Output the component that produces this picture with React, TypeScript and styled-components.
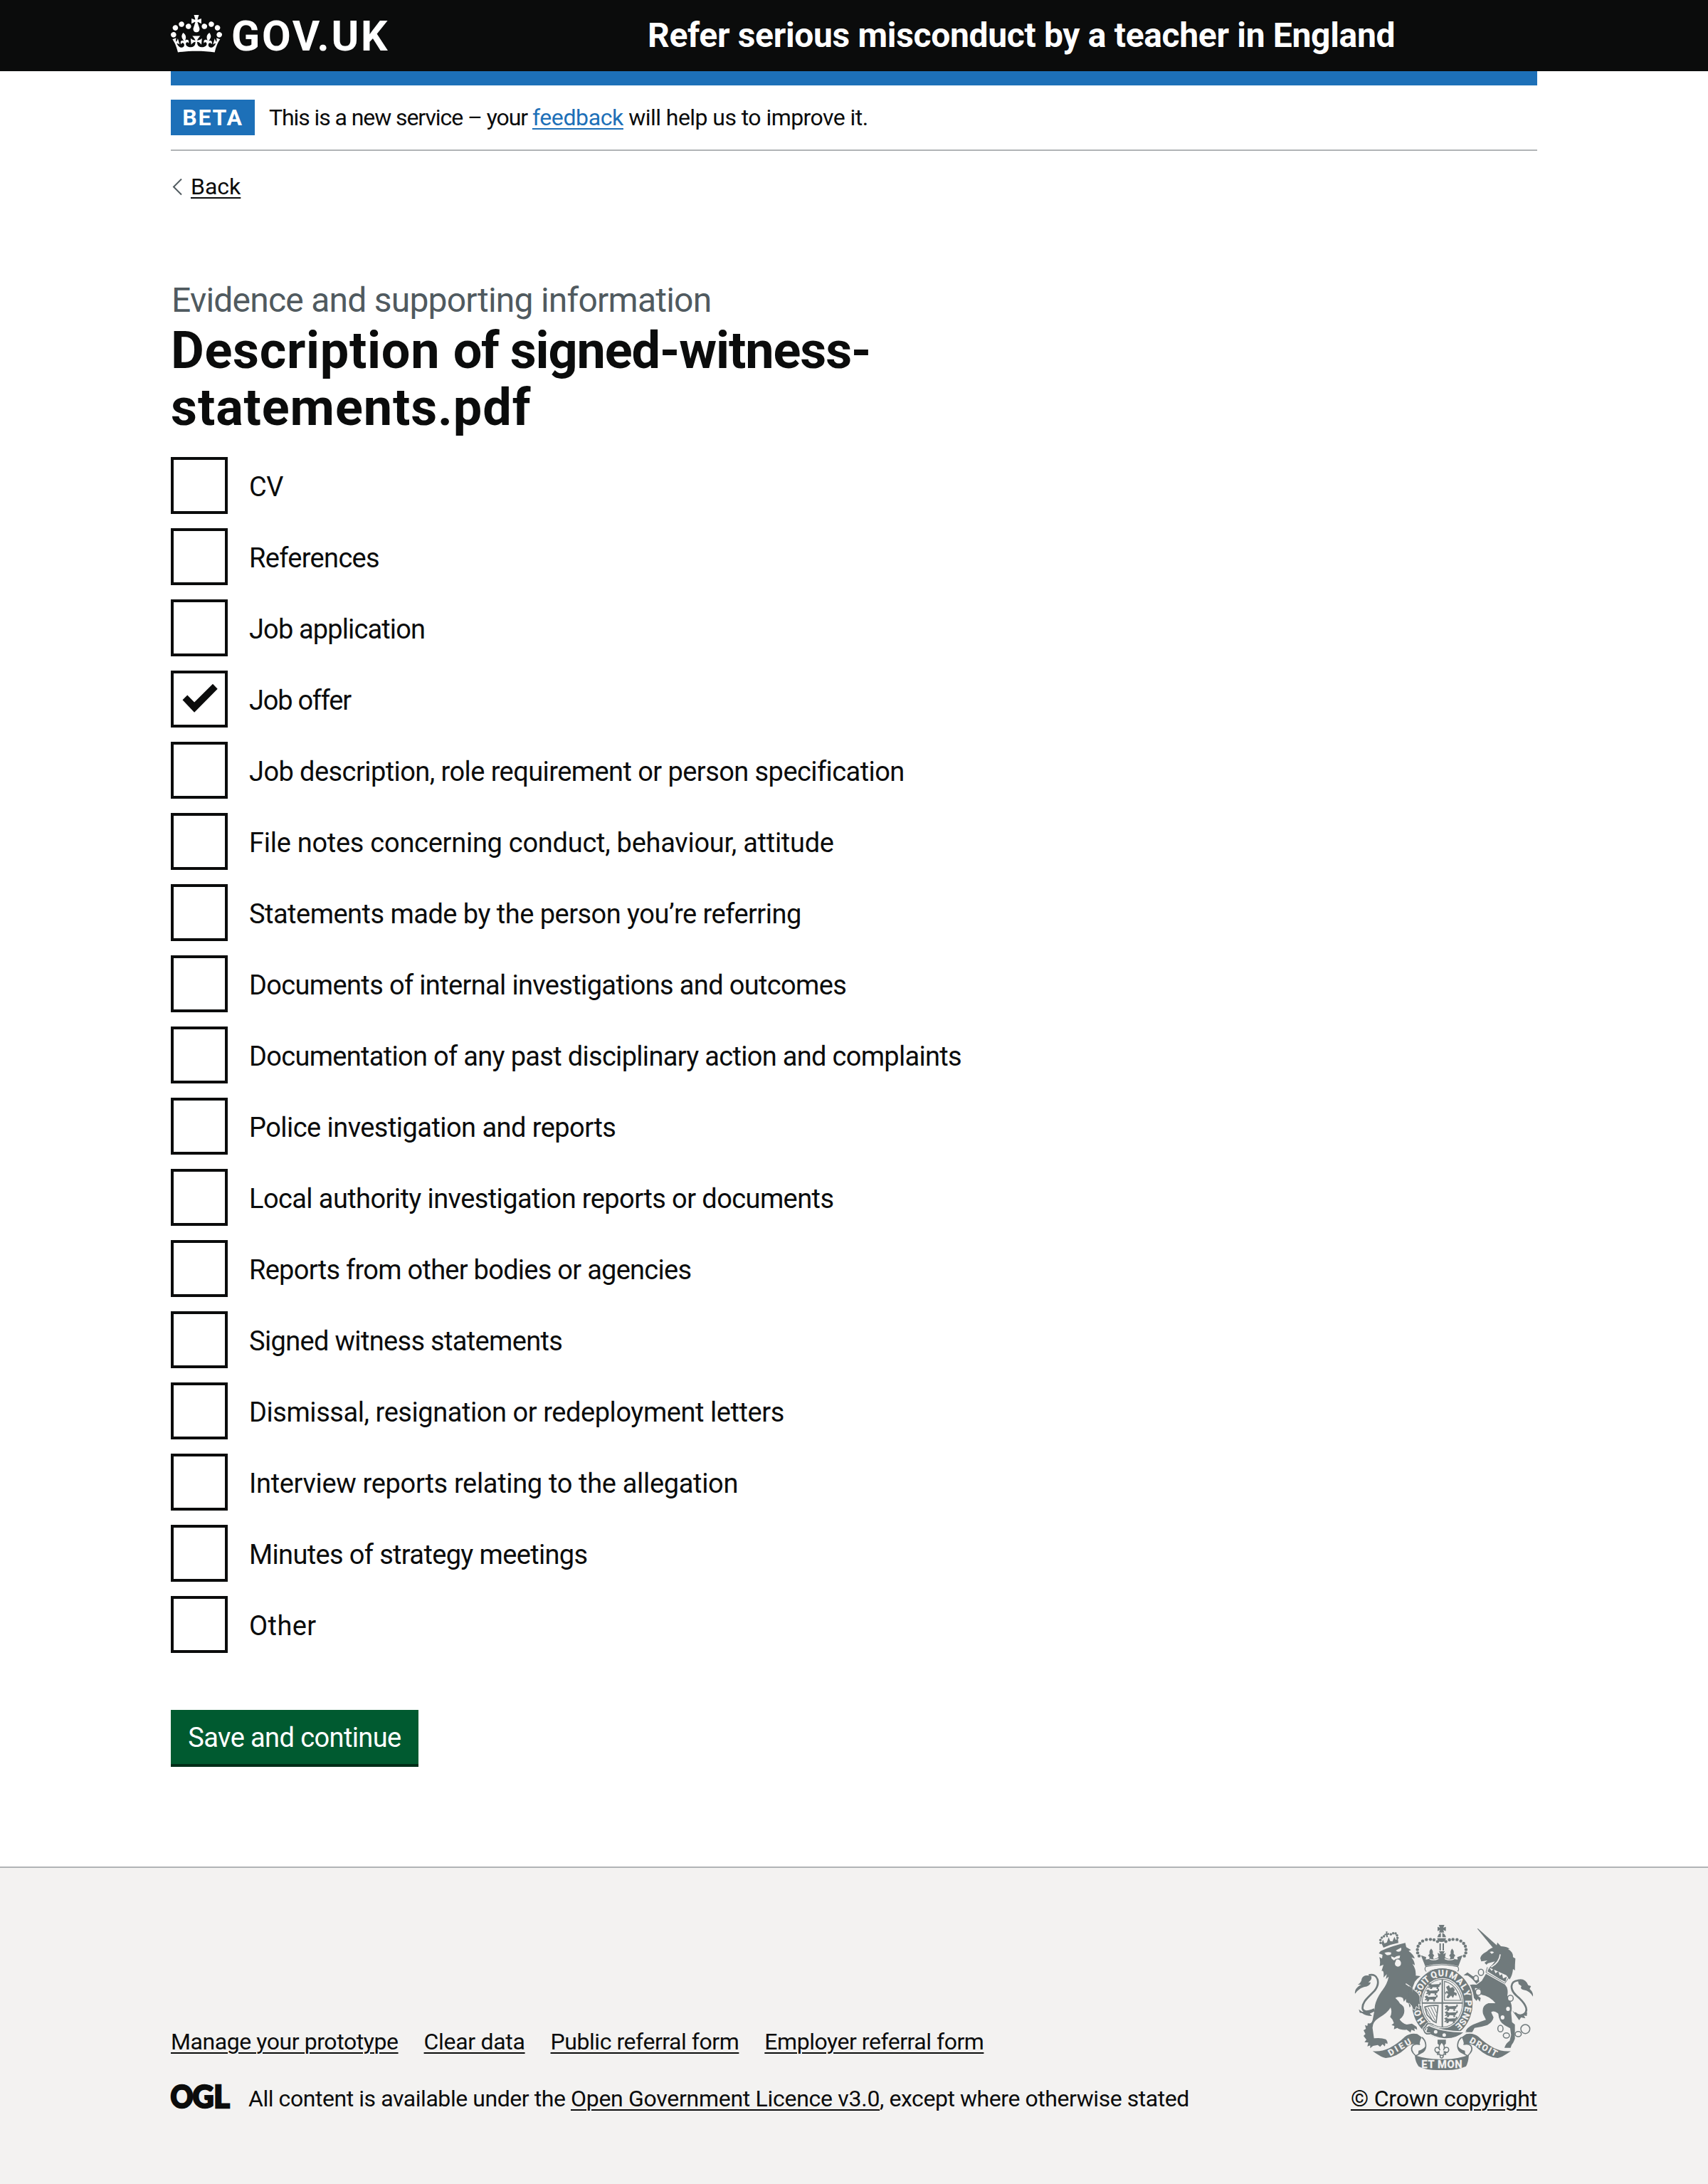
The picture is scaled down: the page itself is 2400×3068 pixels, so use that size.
import React, { useState } from 'react';
import styled, { createGlobalStyle } from 'styled-components';

const ink = '#0b0c0c';
const blue = '#1d70b8';
const rule = '#b1b4b6';
const footerBg = '#f3f2f1';
const crestGrey = '#707a7c';
const sans = 'Roboto, "Noto Sans", Arial, sans-serif';

const GlobalStyle = createGlobalStyle`
  *, *::before, *::after { box-sizing: border-box; }
  body {
    margin: 0;
    background: #fff;
    color: ${ink};
    font-family: ${sans};
    font-size: 38px;
    line-height: 50px;
  }
`;

const Page = styled.div`
  display: flex;
  flex-direction: column;
  min-height: 3068px;
`;

const Container = styled.div`
  width: 1920px;
  margin: 0 auto;
`;

/* header */
const Header = styled.header`
  height: 100px;
  background: ${ink};
  color: #fff;
`;

const HeaderRow = styled(Container)`
  display: flex;
  height: 100px;
`;

const HomeLink = styled.a`
  display: flex;
  align-items: flex-start;
  width: 670px;
  padding-top: 21px;
  color: inherit;
  text-decoration: none;
`;

const Logotype = styled.span`
  margin: -4px 0 0 13px;
  font-size: 59px;
  font-weight: 700;
  line-height: 68px;
  letter-spacing: 2.7px;
`;

const ServiceName = styled.a`
  padding-top: 20px;
  color: inherit;
  font-size: 48px;
  font-weight: 700;
  line-height: 60px;
  letter-spacing: -0.33px;
  text-decoration: none;
`;

const BlueBar = styled.div`
  height: 20px;
  background: ${blue};
`;

/* phase banner */
const PhaseBanner = styled.div`
  display: flex;
  align-items: center;
  gap: 20px;
  padding: 20px 0;
  border-bottom: 2px solid ${rule};
`;

const PhaseTag = styled.strong`
  display: flex;
  justify-content: center;
  width: 118px;
  height: 50px;
  background: ${blue};
  color: #fff;
  font-size: 32px;
  line-height: 51px;
  letter-spacing: 1.8px;
`;

const PhaseText = styled.span<{ $spacing: number }>`
  font-size: 32px;
  line-height: 50px;
  letter-spacing: ${({ $spacing }) => $spacing}px;
  white-space: pre;
`;

const Link = styled.a<{ $color?: string; $spacing?: number }>`
  color: ${({ $color }) => $color ?? ink};
  letter-spacing: ${({ $spacing }) => $spacing ?? 0}px;
  text-decoration: underline;
  text-decoration-thickness: 2px;
  text-underline-offset: 4px;
  white-space: pre;
`;

/* main */
const BackRow = styled.div`
  display: flex;
  align-items: center;
  gap: 12px;
  margin-top: 30px;
  padding-left: 2px;
  font-size: 32px;
  line-height: 40px;
`;

const Main = styled.main`
  padding-top: 110px;
`;

const Caption = styled.span`
  display: block;
  height: 61px;
  padding-left: 1px;
  color: #505a5f;
  font-size: 48px;
  line-height: 60px;
  letter-spacing: -0.77px;
`;

const Title = styled.h1`
  margin: 0 0 29px;
  font-size: 72px;
  font-weight: 700;
  line-height: 80px;
`;

const TitleWord = styled.span<{ $spacing: number }>`
  letter-spacing: ${({ $spacing }) => $spacing}px;
`;

const Options = styled.div`
  display: flex;
  flex-direction: column;
  gap: 20px;
`;

const Option = styled.label`
  display: flex;
  height: 80px;
  cursor: pointer;
`;

const HiddenInput = styled.input`
  appearance: none;
  width: 0;
  height: 0;
  margin: 0;
`;

const Box = styled.span`
  width: 80px;
  height: 80px;
  border: 4px solid ${ink};
  background: #fff;
`;

const OptionText = styled.span<{ $spacing: number }>`
  padding: 17px 0 0 30px;
  letter-spacing: ${({ $spacing }) => $spacing}px;
`;

const Submit = styled.button`
  display: block;
  width: 348px;
  height: 80px;
  margin: 80px 0 140px;
  padding: 1px 0 0;
  border: 0;
  border-bottom: 4px solid #002d18;
  background: #005a30;
  color: #fff;
  font: 400 38px/50px ${sans};
  letter-spacing: -0.6px;
`;

/* footer */
const Footer = styled.footer`
  flex: 1;
  padding-top: 80px;
  border-top: 2px solid ${rule};
  background: ${footerBg};
  font-size: 32px;
  line-height: 40px;
`;

const FooterRow = styled(Container)`
  display: flex;
  justify-content: space-between;
  align-items: flex-end;
`;

const FooterMeta = styled.div`
  display: flex;
  flex-direction: column;
  gap: 40px;
`;

const FooterLinks = styled.nav`
  display: flex;
  gap: 36px;
`;

const Licence = styled.div`
  display: flex;
  gap: 26px;
`;

const LicenceText = styled.span`
  letter-spacing: -0.44px;
  white-space: pre;
`;

const CopyrightColumn = styled.div`
  display: flex;
  flex-direction: column;
  align-items: center;
  gap: 20px;
  width: 262px;
`;

const Drawing = styled.svg`
  display: block;
  flex: none;
  overflow: visible;
`;

const Crown = () => (
  <Drawing width="72" height="53" viewBox="0 0 132 97" fill="#fff" aria-hidden="true">
    <path d="M25 30.2c3.5 1.5 7.7-.2 9.1-3.7 1.5-3.6-.2-7.8-3.9-9.2-3.6-1.4-7.6.3-9.1 3.9-1.4 3.5.3 7.5 3.9 9zM9 39.5c3.6 1.5 7.8-.2 9.2-3.7 1.5-3.6-.2-7.8-3.9-9.1-3.6-1.5-7.6.2-9.1 3.8-1.4 3.5.3 7.5 3.8 9zM4.4 57.2c3.5 1.5 7.7-.2 9.1-3.8 1.5-3.6-.2-7.7-3.9-9.1-3.5-1.5-7.6.3-9.1 3.8-1.4 3.5.3 7.6 3.9 9.1zm38.3-21.4c3.5 1.5 7.7-.2 9.1-3.8 1.5-3.6-.2-7.7-3.9-9.1-3.6-1.5-7.6.3-9.1 3.8-1.3 3.6.4 7.7 3.9 9.1zm64.4-5.6c-3.6 1.5-7.8-.2-9.1-3.7-1.5-3.6.2-7.8 3.8-9.2 3.6-1.4 7.7.3 9.2 3.9 1.3 3.5-.4 7.5-3.9 9zm15.9 9.3c-3.6 1.5-7.7-.2-9.1-3.7-1.5-3.6.2-7.8 3.7-9.1 3.6-1.5 7.7.2 9.2 3.8 1.5 3.5-.3 7.5-3.8 9zm4.7 17.7c-3.6 1.5-7.8-.2-9.2-3.8-1.5-3.6.2-7.7 3.9-9.1 3.6-1.5 7.7.3 9.2 3.8 1.3 3.5-.4 7.6-3.9 9.1zM89.3 35.8c-3.6 1.5-7.8-.2-9.2-3.8-1.4-3.6.2-7.7 3.9-9.1 3.6-1.5 7.7.3 9.2 3.8 1.4 3.6-.3 7.7-3.9 9.1zM69.7 17.7l8.9 4.7V9.3l-8.9 2.8c-.2-.3-.5-.6-.9-.9L72.4 0H59.6l3.5 11.2c-.3.3-.6.5-.9.9l-8.8-2.8v13.1l8.8-4.7c.3.3.6.7.9.9l-5 15.4v.1c-.2.8-.4 1.6-.4 2.4 0 4.1 3.1 7.5 7 8.1h.2c.3 0 .7.1 1 .1.4 0 .7 0 1-.1h.2c4-.6 7.1-4.1 7.1-8.1 0-.8-.1-1.7-.4-2.4V34l-5.1-15.4c.4-.2.7-.6 1-.9zM66 92.8c16.9 0 32.8 1.1 47.1 3.2 4-16.9 8.9-26.7 14-33.5l-9.6-3.4c1 4.9 1.1 7.2 0 10.2-1.5-1.4-3-4.3-4.2-8.7L108.6 76c2.8-2 5-3.2 7.5-3.3-4.4 9.4-10 11.9-13.6 11.2-4.3-.8-6.3-4.6-5.6-7.9 1-4.7 5.7-5.9 8-.5 4.3-8.7-3-11.4-7.6-8.8 7.1-7.2 7.9-13.5 2.1-21.1-8 6.1-8.1 12.3-4.5 20.8-4.7-5.4-12.1-2.5-9.5 6.2 3.4-5.2 7.9-2 7.2 3.1-.6 4.3-6.4 7.8-13.5 7.2-10.3-.9-10.9-8-11.2-13.8 2.5-.5 7.1 1.8 11 7.3L80.2 60c-4.1 4.4-8 5.3-12.3 5.4 1.4-4.4 8-11.6 8-11.6H55.5s6.4 7.2 7.9 11.6c-4.2-.1-8-1-12.3-5.4l1.4 16.4c3.9-5.5 8.5-7.7 10.9-7.3-.3 5.8-.9 12.8-11.1 13.8-7.2.6-12.9-2.9-13.5-7.2-.7-5 3.8-8.3 7.1-3.1 2.7-8.7-4.6-11.6-9.4-6.2 3.7-8.5 3.6-14.7-4.6-20.8-5.8 7.6-5 13.9 2.2 21.1-4.7-2.6-11.9.1-7.7 8.8 2.3-5.5 7.1-4.2 8.1.5.7 3.3-1.3 7.1-5.7 7.9-3.5.7-9-1.8-13.5-11.2 2.5.1 4.7 1.3 7.5 3.3l-4.7-15.4c-1.2 4.4-2.7 7.2-4.3 8.7-1.1-3-.9-5.3 0-10.2l-9.5 3.4c5 6.9 9.9 16.7 14 33.5 14.8-2.1 30.8-3.2 47.7-3.2z" />
  </Drawing>
);

const Chevron = () => (
  <Drawing width="14" height="24" viewBox="0 0 14 24" fill="none" stroke="#505a5f" strokeWidth="2">
    <path d="M13 1.5 2 12.5 13 23.5" />
  </Drawing>
);

const Tick = () => (
  <Drawing width="72" height="72" viewBox="4 4 72 72" fill={ink}>
    <path d="M16.5 41.3 23.3 34.6 33.1 44.4 59 18.8 65.7 25.8 33.1 58.8z" />
  </Drawing>
);

const OglMark = () => (
  <Drawing width="83" height="40" viewBox="0 0 83 40" aria-label="OGL">
    <g fill={ink} stroke={ink} strokeWidth="2.4" fontFamily="Lato" fontWeight="900" fontSize="43">
      <text x="-0.5" y="33" textLength="32" lengthAdjust="spacingAndGlyphs">O</text>
      <text x="30.5" y="33" textLength="30" lengthAdjust="spacingAndGlyphs">G</text>
      <text x="60.3" y="33" textLength="22.5" lengthAdjust="spacingAndGlyphs">L</text>
    </g>
  </Drawing>
);

const crownPearls = [
  [402, 203], [396, 190], [395, 176], [398, 162], [405, 150],
  [417, 140], [433, 134], [450, 133], [465, 135], [480, 142],
];
const lionPearls = [
  [240, 148], [239, 136], [245, 126], [254, 120], [283, 112], [293, 107], [303, 108], [309, 116], [311, 127],
];
const chain = [
  [663, 272, 11, 13], [642, 297, 10, 11], [652, 355, 12, 14], [787, 381, 12, 13],
  [745, 509, 11, 14], [770, 538, 13, 11], [820, 532, 13, 11], [850, 511, 19, 19],
];
const motto: [string, number][] = [
  ['H', -126], ['O', -109],
  ['S', -70], ['O', -57], ['I', -46], ['T', -38],
  ['Q', -19], ['U', -3], ['I', 9],
  ['M', 25], ['A', 43], ['L', 57], ['Y', 71],
  ['P', 90], ['E', 102], ['N', 115], ['S', 128], ['E', 140],
];

const PassantLion = ({ x, y }: { x: number; y: number }) => (
  <g transform={`translate(${x} ${y}) scale(1.4 1.35)`}>
    <path d="M2 3l7-3 5 4 18-1 5 3v5l-4 1 1 6h-6l1-5-12-1-3 6h-6l2-5-5 2-3-2 5-4z" />
    <path d="M32 4q8-1 5-6h4q3 9-6 9z" />
  </g>
);

const MottoLetter = ({ char, angle }: { char: string; angle: number }) => {
  const t = (angle * Math.PI) / 180;
  const x = 500 + 97 * Math.sin(t);
  const y = 402 - 114 * Math.cos(t);
  return (
    <text transform={`translate(${x.toFixed(1)} ${y.toFixed(1)}) rotate(${angle})`}>{char}</text>
  );
};

const Ribbon = () => (
  <g>
    <path d="M206 604Q242 608 276 592Q316 570 342 544Q364 526 394 532L414 546Q406 556 404 576Q370 566 344 594Q306 630 262 633Q248 634 206 604Z" />
    <path d="M414 546C432 560 438 592 418 608L388 624Q362 600 374 582Q384 570 406 576" fill={footerBg} stroke={crestGrey} strokeWidth="5" />
    <path d="M428 584Q420 596 400 602L398 618L420 606Q432 596 428 584Z" />
  </g>
);

const Crest = () => (
  <Drawing width="250" height="204" viewBox="132 72 750 612" fill={crestGrey} aria-hidden="true">
    {/* lion */}
    <g>
      <path d="M190 284C230 274 240 318 214 350C190 376 160 396 164 426Q170 446 212 428" fill="none" stroke={crestGrey} strokeWidth="8" />
      <path d="M132 362Q128 340 158 324L144 324Q160 314 160 300Q168 278 200 288Q206 302 188 314L198 314Q196 330 170 334Q148 340 132 362Z" />
      <path d="M148 428L162 438Q190 440 212 424L216 436L194 446L204 456Q176 456 162 444L152 442Z" />
      <path d="M232 192L240 182Q290 160 344 148L348 166L368 178L358 182Q378 196 384 214L370 209Q384 226 384 242L374 236Q390 258 388 286L408 288Q392 300 384 312L374 338L398 360Q410 374 406 392L410 412L400 406L403 426L390 416L386 432L376 428L370 412L362 420L358 402L348 398L346 384L338 396L334 380Q318 372 302 380Q316 392 322 404Q340 412 340 434Q340 456 320 470Q330 486 350 492L372 488L392 502L394 514L382 508L384 520L370 514L366 526L350 514Q324 516 310 506L296 512L298 498L286 494L296 486Q292 470 280 460Q290 440 282 420Q268 444 232 464Q204 482 206 508L212 550Q240 546 262 554Q272 564 268 574L260 570L258 584L248 575L238 586L228 578L208 582L196 592L196 580L184 584L188 568L172 566L180 556L168 540L176 532L168 516L178 510L174 494L184 498L186 486Q200 492 206 474Q214 440 216 412Q222 384 244 352Q268 322 274 290L262 300L266 280L252 294Q256 262 244 266L252 240L236 246Q240 222 234 208L246 214L248 198Z" />
      <path d="M346 320Q364 330 376 346" fill="none" stroke={footerBg} strokeWidth="4" />
      <path d="M256 190Q272 184 284 188L284 196Q272 202 264 198ZM304 180L326 168Q330 178 322 184Q310 188 304 180ZM284 204L298 210Q308 200 322 202L320 212L304 216L296 222L286 214ZM306 218Q322 214 326 232Q326 248 312 248Q300 246 300 234Z" fill={footerBg} />
      <path d="M244 150L252 168Q282 154 315 148L312 128L304 136L298 122L290 142L280 140L274 124L266 146L256 150L250 134Z" />
      <path d="M262 100H269L268 108L276 106V113L269 114L271 124H264L263 115L256 117V110L263 109Z" />
      {lionPearls.map(([cx, cy]) => <circle key={`${cx}-${cy}`} cx={cx} cy={cy} r="5.2" />)}
      <path d="M250 172Q286 156 318 150" fill="none" stroke={footerBg} strokeWidth="3" />
    </g>
    {/* unicorn */}
    <g>
      <path d="M647 88L651 88L734 162L716 172Z" />
      <path d="M660 212Q662 198 688 184Q704 166 728 164L732 146L747 162Q776 164 784 174L776 173Q800 186 798 208L808 214Q806 240 806 264L798 258Q796 284 784 302L770 284L698 252Q712 240 722 226L692 234L686 240L678 232L690 222L664 226Z" />
      <path d="M744 196Q742 228 706 250" fill="none" stroke={footerBg} strokeWidth="5" />
      <path d="M700 186Q712 180 718 188L708 194Z" fill={footerBg} />
      <path d="M690 250L684 272L764 318L780 294" fill="none" stroke={crestGrey} strokeWidth="3" />
      <path d="M690 268L698 252L708 266L716 256L724 276L736 268L742 286L752 280L756 298L772 290L766 312L742 300Z" />
      <path d="M684 278L764 323Q780 340 774 370Q800 408 790 442L794 482L806 492L806 552Q800 570 792 578L788 590H762Q768 570 784 560L790 536L786 508L764 496Q738 480 736 446Q716 430 706 440L716 462Q712 482 690 494Q660 504 636 506L626 524H596Q604 504 630 492Q660 480 684 472L672 448Q664 412 694 402L724 402Q700 372 664 366L658 340L638 338Q636 354 648 370L662 380L658 396L650 384L644 392L628 374L608 330Q604 322 644 324L666 308Z" />
      <path d="M590 284L606 272L628 288L650 292L656 310L644 320L626 300L608 286Z" />
      <path d="M820 306C784 310 784 344 812 370C848 400 866 430 846 446Q826 462 806 442" fill="none" stroke={crestGrey} strokeWidth="8" />
      <path d="M818 302Q850 294 862 326L874 330L868 342Q884 354 882 374Q868 350 842 346Q826 342 834 330L822 322Z" />
      <path d="M794 432L812 448Q836 456 858 440L856 456L844 454L850 466L832 462L824 474Z" />
      <ellipse cx="777" cy="426" rx="8" ry="9" fill={footerBg} />
      <ellipse cx="754" cy="462" rx="8" ry="9" fill={footerBg} />
      {chain.map(([cx, cy, rx, ry]) => (
        <ellipse key={`${cx}-${cy}`} cx={cx} cy={cy} rx={rx} ry={ry} fill={footerBg} stroke={crestGrey} strokeWidth="4.5" />
      ))}
    </g>
    {/* crown */}
    <g>
      <path d="M485 72H509L504 84L515 80V98L504 94L508 104H486L490 94L480 98V80L490 84ZM479 124Q484 108 494 106V124ZM500 106Q510 108 516 124H500ZM478 128H516Q512 144 497 144Q482 144 478 128Z" />
      <path d="M488 150H494V180H488ZM501 150H507V180H501Z" />
      {crownPearls.map(([cx, cy]) => (
        <React.Fragment key={`${cx}-${cy}`}>
          <circle cx={cx} cy={cy} r="6.6" />
          <circle cx={995 - cx} cy={cy} r="6.6" />
        </React.Fragment>
      ))}
      <path d="M410 200L432 208L430 218L444 216Q450 208 440 202L447 192Q442 184 453 172Q464 184 459 192L466 202Q458 208 464 216Q474 216 484 208L480 190L492 196L486 183H510L504 196L515 190L511 208Q520 216 531 216Q538 208 529 202L536 192Q532 184 541 172Q552 184 547 192L555 202Q546 208 551 216L565 218L563 208L585 200L571 238L568 246Q497 226 428 246Z" />
      <path d="M446 216Q464 224 484 214M510 214Q530 224 550 216" fill="none" stroke={footerBg} strokeWidth="4" />
      <path d="M430 248Q497 232 565 248Q574 262 562 270Q497 246 434 270Q422 262 430 248Z" fill={footerBg} stroke={crestGrey} strokeWidth="3.5" />
    </g>
    {/* garter and shield */}
    <g>
      <ellipse cx="500" cy="402" rx="132" ry="151" fill="none" stroke={footerBg} strokeWidth="5" />
      <ellipse cx="500" cy="402" rx="128" ry="147" />
      <ellipse cx="500" cy="402" rx="90" ry="106" fill={footerBg} />
      <ellipse cx="500" cy="402" rx="85" ry="101" fill="none" stroke={crestGrey} strokeWidth="3" />
      <g fill={footerBg} stroke={footerBg} strokeWidth="0.8" fontFamily={sans} fontWeight="700" fontSize="37" textAnchor="middle">
        {motto.map(([char, angle]) => <MottoLetter key={angle} char={char} angle={angle} />)}
      </g>
      <path d="M497 301H503V503H497ZM414 398H586V404H414Z" />
      <PassantLion x={436} y={318} />
      <PassantLion x={428} y={344} />
      <PassantLion x={422} y={370} />
      <PassantLion x={507} y={410} />
      <PassantLion x={507} y={436} />
      <PassantLion x={505} y={462} />
      <path d="M509 390V310Q560 322 578 390Z" fill="none" stroke={crestGrey} strokeWidth="3.5" />
      <path d="M516 334l12-8 5 12 12-4 8 12-4 8 12 6-2 12-8-6-6 14-8-10-12 12-8-4 8-14-8-6-2 8-4-8 8-8 6 4z" />
      <path d="M426 418Q452 410 482 412L474 484L462 478L436 452Z" fill={footerBg} stroke={crestGrey} strokeWidth="5" />
      <path d="M440 420L470 476M452 418L472 460M464 416L476 444M432 424L456 470" stroke={crestGrey} strokeWidth="3" />
      <path d="M374 340L398 360Q410 374 406 392L410 412L400 406L403 426L390 416L386 432L376 428L370 412L362 404Z" stroke={footerBg} strokeWidth="3" />
      <path d="M360 330L374 339L374 408L356 398Z" />
      <path d="M440 494Q510 526 596 522Q560 554 508 552Q462 546 430 524Z" stroke={footerBg} strokeWidth="5" />
      <circle cx="472" cy="523" r="7.5" fill={footerBg} />
      <circle cx="508" cy="536" r="7.5" fill={footerBg} />
      <path d="M462 492Q436 480 430 500Q416 508 424 520Q430 536 450 530" fill="none" stroke={footerBg} strokeWidth="11" />
      <path d="M462 492Q436 480 430 500Q416 508 424 520Q430 536 450 530M434 504L448 508" fill="none" stroke={crestGrey} strokeWidth="5" />
    </g>
    {/* pendant */}
    <path d="M480 556H515V572L506 582H489L480 572Z" />
    <path d="M497 566Q480 584 490 600Q484 584 472 590Q464 602 476 610L486 606V612H480V618H490L492 628H503L505 618H514V612H508V606L520 610Q532 602 524 590Q510 584 505 600Q515 584 497 566Z" fill={footerBg} stroke={crestGrey} strokeWidth="4.5" />
    <circle cx="497" cy="627" r="6" fill={footerBg} stroke={crestGrey} strokeWidth="4" />
    {/* ribbon */}
    <Ribbon />
    <g transform="translate(995 0) scale(-1 1)"><Ribbon /></g>
    <path d="M384 622Q440 640 497 638Q556 640 612 620Q610 650 600 668Q560 686 497 684Q430 686 400 668Q386 650 384 622Z" />
    <g fill={footerBg} stroke={footerBg} strokeWidth="0.8" fontFamily={sans} fontWeight="700" fontSize="36" textAnchor="middle">
      <text x="498" y="674" textLength="172" fontSize="44">ET MON</text>
      <text transform="translate(326 598) rotate(-30)" textLength="106">DIEU</text>
      <text transform="translate(668 597) rotate(29)" textLength="126">DROIT</text>
    </g>
  </Drawing>
);

const options: { label: string; spacing: number }[] = [
  { label: 'CV', spacing: -0.5 },
  { label: 'References', spacing: -0.68 },
  { label: 'Job application', spacing: -0.87 },
  { label: 'Job offer', spacing: -1.24 },
  { label: 'Job description, role requirement or person specification', spacing: -0.57 },
  { label: 'File notes concerning conduct, behaviour, attitude', spacing: -0.27 },
  { label: 'Statements made by the person you’re referring', spacing: -0.52 },
  { label: 'Documents of internal investigations and outcomes', spacing: -0.65 },
  { label: 'Documentation of any past disciplinary action and complaints', spacing: -0.69 },
  { label: 'Police investigation and reports', spacing: -0.55 },
  { label: 'Local authority investigation reports or documents', spacing: -0.59 },
  { label: 'Reports from other bodies or agencies', spacing: -0.73 },
  { label: 'Signed witness statements', spacing: -0.67 },
  { label: 'Dismissal, resignation or redeployment letters', spacing: -0.44 },
  { label: 'Interview reports relating to the allegation', spacing: -0.33 },
  { label: 'Minutes of strategy meetings', spacing: -0.65 },
  { label: 'Other', spacing: 0.4 },
];

const footerLinks = [
  { label: 'Manage your prototype', spacing: -0.43 },
  { label: 'Clear data', spacing: -0.31 },
  { label: 'Public referral form', spacing: -0.45 },
  { label: 'Employer referral form', spacing: -0.47 },
];

export default function App() {
  const [checked, setChecked] = useState<string[]>(['Job offer']);
  const toggle = (label: string) =>
    setChecked((now) => (now.includes(label) ? now.filter((l) => l !== label) : [...now, label]));

  return (
    <Page>
      <GlobalStyle />
      <Header>
        <HeaderRow>
          <HomeLink href="#">
            <Crown />
            <Logotype>GOV.UK</Logotype>
          </HomeLink>
          <ServiceName href="#">Refer serious misconduct by a teacher in England</ServiceName>
        </HeaderRow>
      </Header>
      <Container>
        <BlueBar />
        <PhaseBanner>
          <PhaseTag>BETA</PhaseTag>
          <PhaseText $spacing={-1.08}>
            This is a new service – your <Link href="#" $color={blue} $spacing={-0.38}>feedback</Link>
            <PhaseText $spacing={-0.56}> will help us to improve it.</PhaseText>
          </PhaseText>
        </PhaseBanner>
        <BackRow>
          <Chevron />
          <Link href="#">Back</Link>
        </BackRow>
        <Main>
          <Caption>Evidence and supporting information</Caption>
          <Title>
            <TitleWord $spacing={0.7}>Description </TitleWord>
            <TitleWord $spacing={-1.5}>of </TitleWord>
            <TitleWord $spacing={-1.1}>signed-witness-</TitleWord>
            <br />
            <TitleWord $spacing={0.9}>statements.pdf</TitleWord>
          </Title>
          <Options>
            {options.map(({ label, spacing }) => (
              <Option key={label}>
                <HiddenInput type="checkbox" checked={checked.includes(label)} onChange={() => toggle(label)} />
                <Box>{checked.includes(label) && <Tick />}</Box>
                <OptionText $spacing={spacing}>{label}</OptionText>
              </Option>
            ))}
          </Options>
          <Submit type="button">Save and continue</Submit>
        </Main>
      </Container>
      <Footer>
        <FooterRow>
          <FooterMeta>
            <FooterLinks>
              {footerLinks.map(({ label, spacing }) => (
                <Link key={label} href="#" $spacing={spacing}>{label}</Link>
              ))}
            </FooterLinks>
            <Licence>
              <OglMark />
              <LicenceText>
                All content is available under the <Link href="#" $spacing={-0.29}>Open Government Licence v3.0</Link>, except where otherwise stated
              </LicenceText>
            </Licence>
          </FooterMeta>
          <CopyrightColumn>
            <Crest />
            <Link href="#" $spacing={-0.17}>© Crown copyright</Link>
          </CopyrightColumn>
        </FooterRow>
      </Footer>
    </Page>
  );
}
